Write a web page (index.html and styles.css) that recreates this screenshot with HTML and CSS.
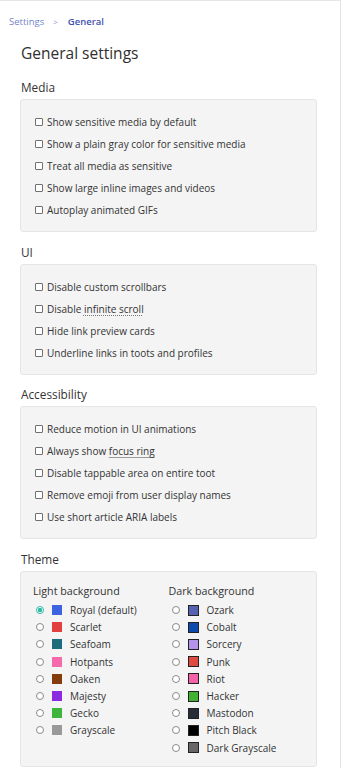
FILE: index.html
```html
<!DOCTYPE html>
<html lang="en">
<head>
<meta charset="utf-8">
<title>General settings</title>
<link rel="stylesheet" href="styles.css">
</head>
<body>
<div class="page">
  <nav class="crumbs"><a class="crumb">Settings</a><span class="sep">&gt;</span><a class="crumb current">General</a></nav>
  <h1 class="title">General settings</h1>

  <section class="group">
    <h2 class="group-title">Media</h2>
    <div class="box">
      <label class="check"><span class="cb"></span>Show sensitive media by default</label>
      <label class="check"><span class="cb"></span>Show a plain gray color for sensitive media</label>
      <label class="check"><span class="cb"></span>Treat all media as sensitive</label>
      <label class="check"><span class="cb"></span>Show large inline images and videos</label>
      <label class="check"><span class="cb"></span>Autoplay animated GIFs</label>
    </div>
  </section>

  <section class="group">
    <h2 class="group-title">UI</h2>
    <div class="box">
      <label class="check"><span class="cb"></span>Disable custom scrollbars</label>
      <label class="check"><span class="cb"></span>Disable&nbsp;<span class="abbr">infinite scroll</span></label>
      <label class="check"><span class="cb"></span>Hide link preview cards</label>
      <label class="check"><span class="cb"></span>Underline links in toots and profiles</label>
    </div>
  </section>

  <section class="group">
    <h2 class="group-title">Accessibility</h2>
    <div class="box">
      <label class="check"><span class="cb"></span>Reduce motion in UI animations</label>
      <label class="check"><span class="cb"></span>Always show&nbsp;<span class="abbr solid">focus ring</span></label>
      <label class="check"><span class="cb"></span>Disable tappable area on entire toot</label>
      <label class="check"><span class="cb"></span>Remove emoji from user display names</label>
      <label class="check"><span class="cb"></span>Use short article ARIA labels</label>
    </div>
  </section>

  <section class="group">
    <h2 class="group-title">Theme</h2>
    <div class="box theme-box">
      <div class="theme-col">
        <div class="col-title">Light background</div>
        <label class="theme"><span class="radio on"></span><span class="sw" style="background:#3d63e3"></span>Royal (default)</label>
        <label class="theme"><span class="radio"></span><span class="sw" style="background:#e2403e"></span>Scarlet</label>
        <label class="theme"><span class="radio"></span><span class="sw" style="background:#1c6c7c"></span>Seafoam</label>
        <label class="theme"><span class="radio"></span><span class="sw" style="background:#f56aac"></span>Hotpants</label>
        <label class="theme"><span class="radio"></span><span class="sw" style="background:#843c0c"></span>Oaken</label>
        <label class="theme"><span class="radio"></span><span class="sw" style="background:#8b2ae0"></span>Majesty</label>
        <label class="theme"><span class="radio"></span><span class="sw" style="background:#3db43c"></span>Gecko</label>
        <label class="theme"><span class="radio"></span><span class="sw" style="background:#999999"></span>Grayscale</label>
      </div>
      <div class="theme-col">
        <div class="col-title">Dark background</div>
        <label class="theme"><span class="radio"></span><span class="sw dark" style="background:#5562b4"></span>Ozark</label>
        <label class="theme"><span class="radio"></span><span class="sw dark" style="background:#0d4aae"></span>Cobalt</label>
        <label class="theme"><span class="radio"></span><span class="sw dark" style="background:#b394ea"></span>Sorcery</label>
        <label class="theme"><span class="radio"></span><span class="sw dark" style="background:#e04a40"></span>Punk</label>
        <label class="theme"><span class="radio"></span><span class="sw dark" style="background:#f462aa"></span>Riot</label>
        <label class="theme"><span class="radio"></span><span class="sw dark" style="background:#43b232"></span>Hacker</label>
        <label class="theme"><span class="radio"></span><span class="sw dark" style="background:#282c37"></span>Mastodon</label>
        <label class="theme"><span class="radio"></span><span class="sw dark" style="background:#000000"></span>Pitch Black</label>
        <label class="theme"><span class="radio"></span><span class="sw dark" style="background:#666666"></span>Dark Grayscale</label>
      </div>
    </div>
  </section>
</div>
</body>
</html>
```
FILE: styles.css
```css
html, body {
  margin: 0;
  padding: 0;
  background: #ffffff;
}
body {
  font-family: "Open Sans", "Noto Sans", "DejaVu Sans", sans-serif;
  color: #333333;
}
.page {
  width: 341px;
  height: 768px;
  box-sizing: border-box;
  border-top: 1px solid #e6e6e6;
  border-right: 1px solid #e2e2e2;
  padding: 14px 23px 0 20px;
  overflow: hidden;
}
.crumbs {
  display: flex;
  align-items: center;
  height: 14px;
  margin-left: -11px;
  font-size: 9.5px;
  line-height: 14px;
}
.crumb {
  color: #7384cc;
}
.crumb.current {
  color: #3f52ad;
  font-weight: 600;
}
.sep {
  color: #8c96c8;
  font-size: 8px;
  margin: 0 10px 0 9px;
}
.title {
  margin: 12px 0 0 1px;
  font-size: 15.5px;
  line-height: 24px;
  font-weight: 400;
  color: #2f2f2f;
}
.group-title {
  margin: 0 0 5px 1px;
  font-size: 11.8px;
  line-height: 14px;
  font-weight: 400;
  color: #333333;
}
.group {
  margin-top: 12.5px;
}
.group:first-of-type {
  margin-top: 15px;
}
.box {
  background: #f4f4f4;
  border: 1px solid #e5e5e5;
  border-radius: 3px;
  padding: 11px 14px 10px;
}
.check {
  display: flex;
  align-items: center;
  height: 22px;
  font-size: 10px;
  color: #333333;
}
.cb {
  width: 8px;
  height: 8px;
  box-sizing: border-box;
  border: 1px solid #707070;
  border-radius: 1px;
  background: #ffffff;
  margin-right: 4px;
  flex: none;
}
.abbr {
  text-decoration: underline dotted #777;
  text-underline-offset: 2px;
}
.abbr.solid {
  text-decoration-style: solid;
  text-decoration-color: #999;
}
.theme-box {
  display: grid;
  grid-template-columns: 1fr 1fr;
  padding: 12px 12px 10px;
  height: 196px;
  box-sizing: border-box;
}
.col-title {
  font-size: 10.7px;
  line-height: 14px;
  margin-bottom: 4px;
  color: #333333;
}
.theme {
  display: flex;
  align-items: center;
  height: 17.2px;
  font-size: 10px;
  padding-left: 3px;
  color: #333333;
}
.radio {
  width: 8px;
  height: 8px;
  box-sizing: border-box;
  border: 1px solid #8a8a8a;
  border-radius: 50%;
  background: #ffffff;
  margin-right: 8px;
  flex: none;
}
.radio.on {
  border-color: #2fb8a2;
  background: radial-gradient(circle, #2fb8a2 0 2px, #ffffff 2.4px);
}
.sw {
  width: 10px;
  height: 10px;
  margin-right: 8px;
  flex: none;
}
.sw.dark {
  width: 11px;
  height: 11px;
  box-sizing: border-box;
  border: 1px solid #222;
}
```
